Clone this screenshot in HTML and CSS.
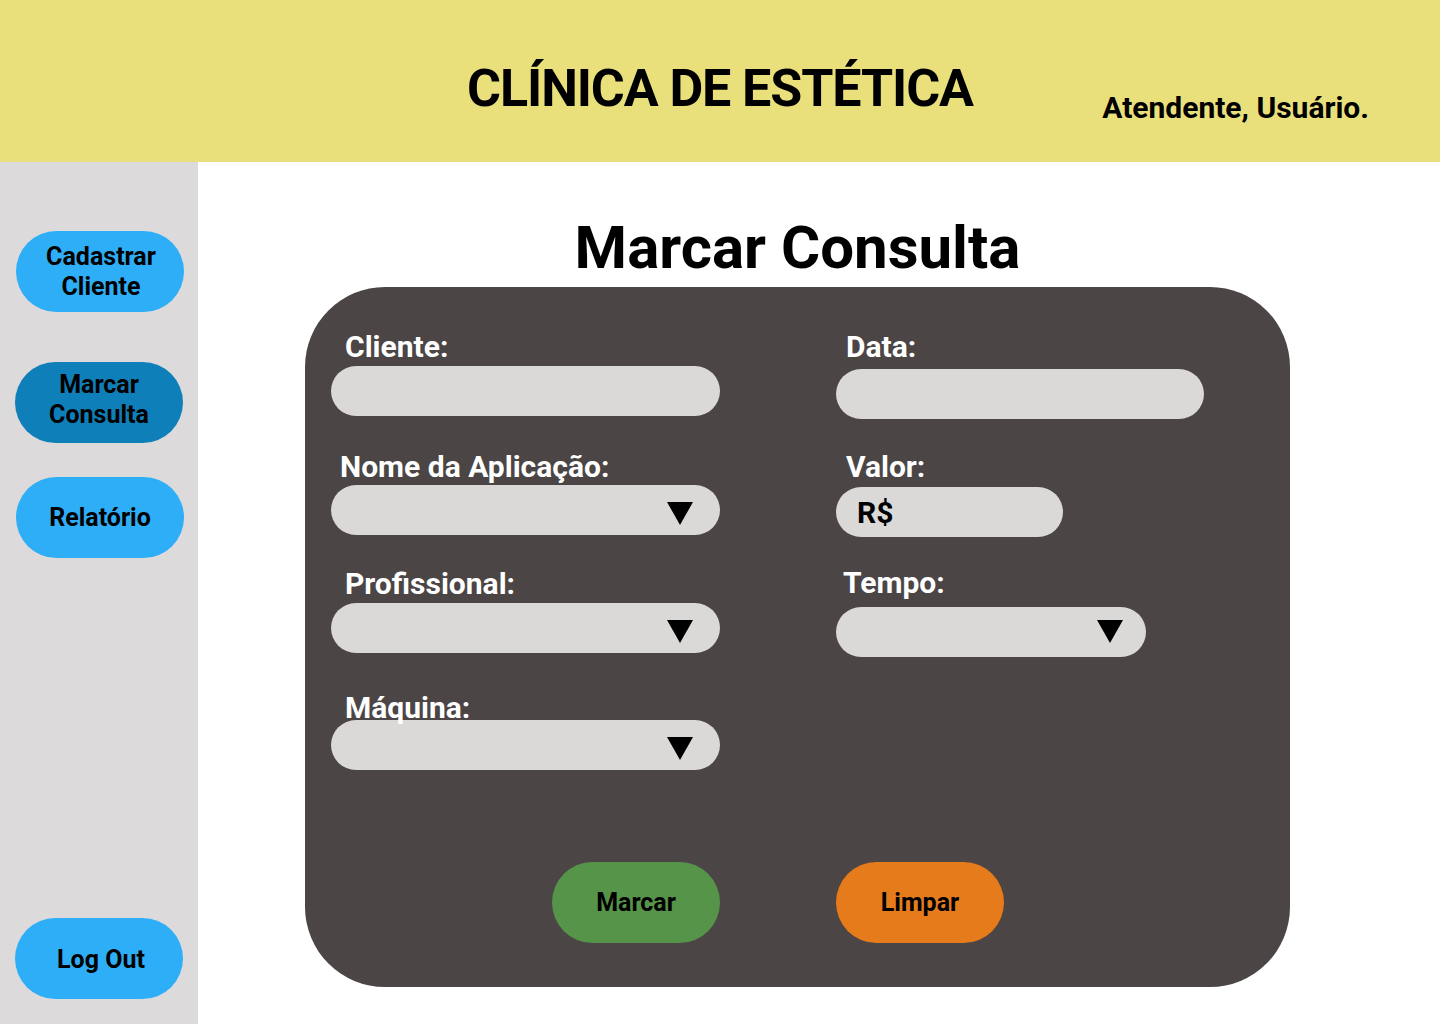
FILE: index.html
```html
<!DOCTYPE html>
<html lang="pt-BR">
<head>
<meta charset="utf-8">
<title>Clínica de Estética - Marcar Consulta</title>
<link rel="stylesheet" href="styles.css">
</head>
<body>
<header class="topbar">
  <div class="topbar-spacer"></div>
  <h1 class="brand">CLÍNICA DE ESTÉTICA</h1>
  <div class="user">Atendente, Usuário.</div>
</header>
<div class="layout">
  <nav class="sidebar">
    <a class="nav-btn nav-first" href="#">Cadastrar<br>Cliente</a>
    <a class="nav-btn nav-active nav-second" href="#">Marcar<br>Consulta</a>
    <a class="nav-btn nav-third" href="#">Relatório</a>
    <a class="nav-btn nav-logout" href="#">Log Out</a>
  </nav>
  <main class="main">
    <h2 class="page-title">Marcar Consulta</h2>
    <section class="panel">
      <div class="col col-left">
        <div class="field f-cliente">
          <label class="label">Cliente:</label>
          <div class="input w-left"></div>
        </div>
        <div class="field f-nome">
          <label class="label">Nome da Aplicação:</label>
          <div class="input w-left select"><span class="arrow"></span></div>
        </div>
        <div class="field f-prof">
          <label class="label">Profissional:</label>
          <div class="input w-left select"><span class="arrow"></span></div>
        </div>
        <div class="field f-maq">
          <label class="label">Máquina:</label>
          <div class="input w-left select"><span class="arrow"></span></div>
        </div>
      </div>
      <div class="col col-right">
        <div class="field f-data">
          <label class="label">Data:</label>
          <div class="input w-data"></div>
        </div>
        <div class="field f-valor">
          <label class="label">Valor:</label>
          <div class="input w-valor"><span class="currency">R$</span></div>
        </div>
        <div class="field f-tempo">
          <label class="label">Tempo:</label>
          <div class="input w-tempo select select-tight"><span class="arrow"></span></div>
        </div>
      </div>
      <div class="actions-left">
        <button class="btn btn-green">Marcar</button>
      </div>
      <div class="actions-right">
        <button class="btn btn-orange">Limpar</button>
      </div>
    </section>
  </main>
</div>
</body>
</html>
```
FILE: styles.css
```css
* { box-sizing: border-box; }
html, body { margin: 0; padding: 0; }
body {
  width: 1440px;
  height: 1024px;
  overflow: hidden;
  font-family: Roboto, "Liberation Sans", Arial, sans-serif;
  background: #ffffff;
  color: #000;
}

.topbar {
  height: 162px;
  background: #EAE07B;
  display: grid;
  grid-template-columns: 1fr auto 1fr;
  align-items: start;
}
.brand {
  margin: 0;
  padding-top: 58px;
  font-size: 52px;
  font-weight: 700;
  line-height: 61px;
  letter-spacing: -1.1px;
}
.user {
  justify-self: end;
  padding-top: 90px;
  padding-right: 71px;
  font-size: 30px;
  font-weight: 700;
  line-height: 35px;
}

.layout {
  display: flex;
  height: 862px;
}
.sidebar {
  width: 198px;
  flex: none;
  background: #DCDADA;
  display: flex;
  flex-direction: column;
  align-items: flex-start;
  padding: 69px 0 25px 16px;
}
.nav-btn {
  width: 168px;
  height: 81px;
  border-radius: 41px;
  background: #2EAEF7;
  color: #000;
  text-decoration: none;
  font-size: 25px;
  font-weight: 700;
  line-height: 30px;
  display: flex;
  align-items: center;
  justify-content: center;
  text-align: center;
}
.nav-first { padding-left: 2px; }
.nav-active { background: #0F7FB9; margin-left: -1px; padding-bottom: 6px; }
.nav-second { margin-top: 50px; }
.nav-third { margin-top: 34px; }
.nav-logout { margin-top: auto; margin-left: -1px; padding-top: 2px; padding-left: 4px; }

.main {
  flex: 1;
  padding-top: 51px;
  padding-left: 107px;
}
.page-title {
  margin: 0;
  width: 985px;
  text-align: center;
  font-size: 60px;
  font-weight: 700;
  line-height: 70px;
}
.panel {
  margin-top: 4px;
  width: 985px;
  height: 700px;
  background: #4B4545;
  border-radius: 80px;
  display: grid;
  grid-template-columns: 389px 1fr;
  grid-template-rows: 1fr auto;
  column-gap: 116px;
  padding: 42px 0 44px 26px;
}
.col { display: flex; flex-direction: column; }
.label {
  display: block;
  position: relative;
  z-index: 1;
  color: #fff;
  font-size: 30px;
  font-weight: 700;
  line-height: 35px;
}
.input {
  height: 50px;
  border-radius: 25px;
  background: #DAD9D7;
  position: relative;
  display: flex;
  align-items: center;
}
.w-left { width: 389px; }
.w-data { width: 368px; }
.w-valor { width: 227px; }
.w-tempo { width: 310px; }

.arrow {
  position: absolute;
  right: 27px;
  top: 17px;
  width: 0;
  height: 0;
  border-left: 13px solid transparent;
  border-right: 13px solid transparent;
  border-top: 23px solid #000;
}
.select-tight .arrow { right: 23px; top: 13px; }

.currency {
  padding-left: 21px;
  font-size: 30px;
  font-weight: 700;
  line-height: 35px;
}

/* left column spacing */
.f-cliente .label { padding-left: 14px; margin-bottom: 2px; }
.f-nome { margin-top: 33px; }
.f-nome .label { padding-left: 9px; margin-bottom: 1px; }
.f-prof { margin-top: 31px; }
.f-prof .label { padding-left: 14px; margin-bottom: 2px; }
.f-maq { margin-top: 37px; }
.f-maq .label { padding-left: 14px; margin-bottom: -5px; }

/* right column spacing */
.f-data .label { padding-left: 10px; margin-bottom: 5px; }
.f-valor { margin-top: 30px; }
.f-valor .label { padding-left: 10px; margin-bottom: 3px; }
.f-tempo { margin-top: 28px; }
.f-tempo .label { padding-left: 7px; margin-bottom: 7px; }

.actions-left { display: flex; justify-content: flex-end; }
.actions-right { display: flex; justify-content: flex-start; }
.btn {
  width: 168px;
  height: 81px;
  border: none;
  border-radius: 41px;
  font-family: Roboto, "Liberation Sans", Arial, sans-serif;
  font-size: 25px;
  font-weight: 700;
  color: #000;
  cursor: pointer;
  padding: 0;
}
.btn-green { background: #56944A; }
.btn-orange { background: #E57B1A; }
```
